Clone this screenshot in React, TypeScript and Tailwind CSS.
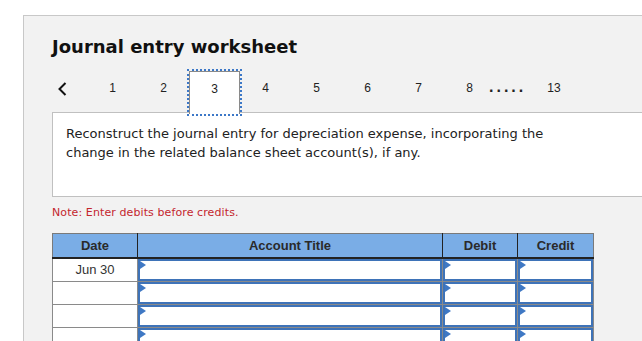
import React from "react";

const Flag = () => (
  <svg className="absolute left-0 top-0" width="6" height="8" viewBox="0 0 6 8">
    <polygon points="0,0 6,4 0,8" fill="#3f78c4" />
  </svg>
);

const InputCell = ({ w }: { w: string }) => (
  <td className={`p-0 border border-[#8a8a8a] ${w}`}>
    <div className="relative h-[22px] border-2 border-[#3e73b8] bg-white">
      <Flag />
    </div>
  </td>
);

export default function App() {
  const pages = ["1", "2", "3", "4", "5", "6", "7", "8"];
  const rows = ["Jun 30", "", "", ""];
  return (
    <div className="w-[642px] h-[341px] overflow-hidden bg-white">
      <div className="ml-[23px] mt-[15px] w-[700px] h-[400px] border border-[#c8c8c8] bg-[#f2f2f2] pl-[28px] pt-[20px]">
        <h1 className="text-[18px] leading-[22px] font-bold text-[#111] font-['DejaVu_Sans',sans-serif]">
          Journal entry worksheet
        </h1>
        <div className="mt-[13px] flex items-start h-[42px] font-['Liberation_Sans',Arial,sans-serif] text-[12px] text-[#222]">
          <div className="w-[35px] h-[42px] flex items-start pt-[11px] pl-[6px]">
            <svg width="9" height="14" viewBox="0 0 9 14">
              <path d="M7.5 1 L1.5 7 L7.5 13" stroke="#111" strokeWidth="2" fill="none" />
            </svg>
          </div>
          {pages.map((p) =>
            p === "3" ? (
              <div
                key={p}
                className="relative z-10 w-[51px] h-[43px] bg-white border border-[#8a8a8a] border-b-0 outline-2 outline-dotted outline-[#3c78c8] text-center pt-[10px] leading-[14px]"
              >
                {p}
              </div>
            ) : (
              <div key={p} className="w-[51px] text-center pt-[10px] leading-[14px]">
                {p}
              </div>
            )
          )}
          <div className="w-[50px] pt-[7px] -ml-[6px] text-[16px] font-bold tracking-[3px] leading-[18px]">.....</div>
          <div className="w-[30px] text-center pt-[10px] leading-[14px]">13</div>
        </div>
        <div className="-mt-px h-[85px] w-[640px] border border-[#c0c0c0] bg-white pl-[13px] pt-[11px] font-['DejaVu_Sans',sans-serif] text-[13px] leading-[19px] text-[#222]">
          <p>Reconstruct the journal entry for depreciation expense, incorporating the</p>
          <p>change in the related balance sheet account(s), if any.</p>
        </div>
        <p className="mt-[9px] font-['DejaVu_Sans',sans-serif] text-[11px] leading-[14px] tracking-[0.1px] text-[#c4262e]">
          Note: Enter debits before credits.
        </p>
        <table className="mt-[13px] border-collapse border border-[#7a7a7a] font-['Liberation_Sans',Arial,sans-serif] text-[13px] text-[#2a2a2a]">
          <thead>
            <tr className="bg-[#7aade6] h-[24px]">
              <th className="w-[85px] font-bold border-r border-r-[#222] border-b-2 border-b-[#222] p-0">Date</th>
              <th className="w-[305px] font-bold border-r border-r-[#222] border-b-2 border-b-[#222] p-0">Account Title</th>
              <th className="w-[75px] font-bold border-r border-r-[#222] border-b-2 border-b-[#222] p-0">Debit</th>
              <th className="w-[76px] font-bold border-b-2 border-b-[#222] p-0">Credit</th>
            </tr>
          </thead>
          <tbody>
            {rows.map((d, i) => (
              <tr key={i} className="h-[23px]">
                <td className="p-0 border border-[#8a8a8a] bg-white text-center text-[#333]">{d}</td>
                <InputCell w="w-[305px]" />
                <InputCell w="w-[75px]" />
                <InputCell w="w-[76px]" />
              </tr>
            ))}
          </tbody>
        </table>
      </div>
    </div>
  );
}
